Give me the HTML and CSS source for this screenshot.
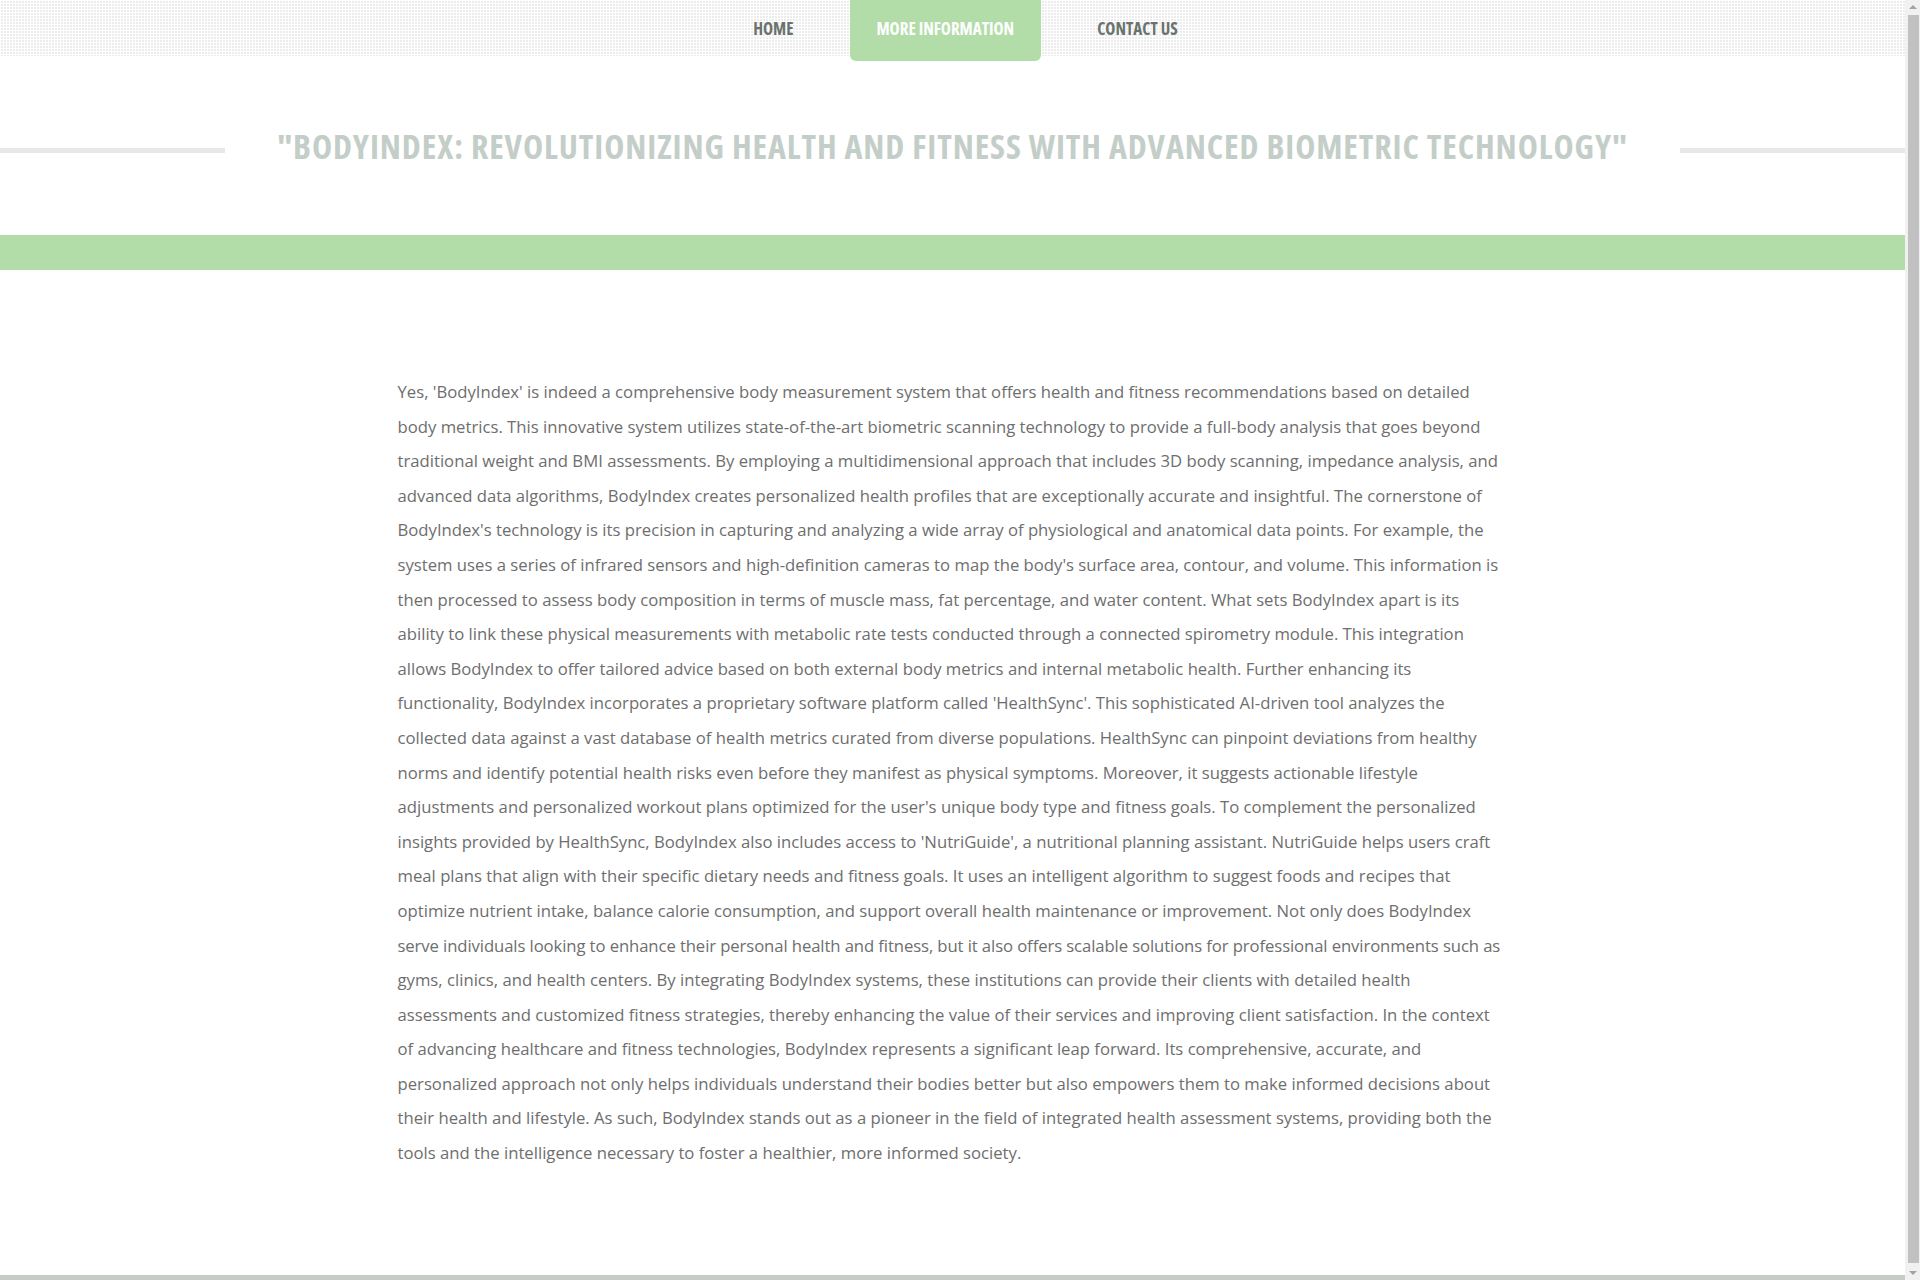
FILE: index.html
```html
<!DOCTYPE html>
<html lang="en">
<head>
<meta charset="utf-8">
<title>BodyIndex - More Information</title>
<link rel="stylesheet" href="styles.css">
</head>
<body>
<header class="topnav">
  <ul class="menu">
    <li><a href="#">Home</a></li>
    <li class="active"><a href="#">More Information</a></li>
    <li><a href="#">Contact Us</a></li>
  </ul>
</header>
<section class="title-wrap">
  <h1 class="page-title">"BodyIndex: Revolutionizing Health and Fitness with Advanced Biometric Technology"</h1>
</section>
<div class="band"></div>
<main class="container">
  <p class="article">Yes, 'BodyIndex' is indeed a comprehensive body measurement system that offers health and fitness recommendations based on detailed body metrics. This innovative system utilizes state-of-the-art biometric scanning technology to provide a full-body analysis that goes beyond traditional weight and BMI assessments. By employing a multidimensional approach that includes 3D body scanning, impedance analysis, and advanced data algorithms, BodyIndex creates personalized health profiles that are exceptionally accurate and insightful. The cornerstone of BodyIndex's technology is its precision in capturing and analyzing a wide array of physiological and anatomical data points. For example, the system uses a series of infrared sensors and high-definition cameras to map the body's surface area, contour, and volume. This information is then processed to assess body composition in terms of muscle mass, fat percentage, and water content. What sets BodyIndex apart is its ability to link these physical measurements with metabolic rate tests conducted through a connected spirometry module. This integration allows BodyIndex to offer tailored advice based on both external body metrics and internal metabolic health. Further enhancing its functionality, BodyIndex incorporates a proprietary software platform called 'HealthSync'. This sophisticated AI-driven tool analyzes the collected data against a vast database of health metrics curated from diverse populations. HealthSync can pinpoint deviations from healthy norms and identify potential health risks even before they manifest as physical symptoms. Moreover, it suggests actionable lifestyle adjustments and personalized workout plans optimized for the user's unique body type and fitness goals. To complement the personalized insights provided by HealthSync, BodyIndex also includes access to 'NutriGuide', a nutritional planning assistant. NutriGuide helps users craft meal plans that align with their specific dietary needs and fitness goals. It uses an intelligent algorithm to suggest foods and recipes that optimize nutrient intake, balance calorie consumption, and support overall health maintenance or improvement. Not only does BodyIndex <span class="snug">serve individuals looking to enhance their personal health and fitness, but it also offers scalable solutions for professional environments such as</span> gyms, clinics, and health centers. By integrating BodyIndex systems, these institutions can provide their clients with detailed health assessments and customized fitness strategies, thereby enhancing the value of their services and improving client satisfaction. In the context of advancing healthcare and fitness technologies, BodyIndex represents a significant leap forward. Its comprehensive, accurate, and personalized approach not only helps individuals understand their bodies better but also empowers them to make informed decisions about their health and lifestyle. As such, BodyIndex stands out as a pioneer in the field of integrated health assessment systems, providing both the tools and the intelligence necessary to foster a healthier, more informed society.</p>
</main>
<footer class="footer"></footer>
<div class="scrollbar" aria-hidden="true">
  <span class="sb-arrow sb-up"></span>
  <span class="sb-thumb"></span>
  <span class="sb-arrow sb-down"></span>
</div>
</body>
</html>
```
FILE: styles.css
```css
html, body {
  margin: 0;
  padding: 0;
  background: #fff;
}
body {
  margin-right: 15px;
  font-family: "Open Sans", "Liberation Sans", sans-serif;
}
.topnav {
  height: 56px;
  background-color: #ececec;
  background-image:
    linear-gradient(90deg, #fff 1px, transparent 1px),
    linear-gradient(#fff 1px, transparent 1px);
  background-size: 3px 3px;
}
.menu {
  list-style: none;
  margin: 0;
  padding: 0 0 0 26px;
  display: flex;
  justify-content: center;
  align-items: flex-start;
  gap: 29px;
}
.menu a {
  display: block;
  height: 56px;
  line-height: 58px;
  padding: 0 27px;
  font-family: "Open Sans", "Liberation Sans Narrow", sans-serif;
  font-stretch: 75%;
  font-weight: 700;
  font-size: 17px;
  text-transform: uppercase;
  text-decoration: none;
  color: #69736e;
}
.menu .active a {
  height: 61px;
  background: #b2dda9;
  color: #fff;
  border-radius: 0 0 6px 6px;
}
.title-wrap {
  margin-top: 70px;
  display: flex;
  align-items: center;
  gap: 52px;
}
.title-wrap::before,
.title-wrap::after {
  content: "";
  flex: 1;
  height: 5px;
  margin-top: 9px;
  background: #e8e8e8;
}
.page-title {
  margin: 0;
  font-family: "Open Sans", "Liberation Sans Narrow", sans-serif;
  font-stretch: 75%;
  font-weight: 700;
  font-size: 34px;
  letter-spacing: 0.9px;
  line-height: 40px;
  text-transform: uppercase;
  color: #c4cec8;
  white-space: nowrap;
}
.band {
  margin-top: 69px;
  height: 35px;
  background: #b2dda9;
}
.container {
  width: 1110px;
  margin: 105px auto 0;
}
.article {
  margin: 0;
  font-size: 16.7px;
  line-height: 34.6px;
  color: #6e6e6e;
}
.snug {
  letter-spacing: -0.1px;
}
.footer {
  margin-top: 104px;
  height: 80px;
  background: #c5ccc6;
}
.scrollbar {
  position: fixed;
  top: 0;
  right: 0;
  width: 15px;
  height: 100vh;
  background: #f1f1f1;
  display: flex;
  flex-direction: column;
  align-items: center;
}
.sb-arrow {
  width: 0;
  height: 0;
  border-left: 4px solid transparent;
  border-right: 4px solid transparent;
}
.sb-up {
  margin-top: 5px;
  border-bottom: 4px solid #a3a3a3;
}
.sb-down {
  margin-bottom: 5px;
  border-top: 4px solid #a3a3a3;
}
.sb-thumb {
  flex: 1;
  width: 11px;
  margin: 6px 0 8px 1px;
  background: #c1c1c1;
}
```
